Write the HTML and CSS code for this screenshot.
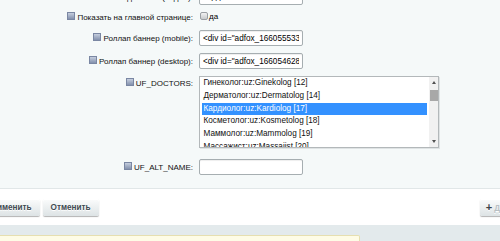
FILE: index.html
```html
<!DOCTYPE html>
<html lang="ru">
<head>
    <meta charset="UTF-8">
    <meta name="viewport" content="width=device-width, initial-scale=1.0">
    <title>Редактирование элемента</title>
    <link rel="stylesheet" href="styles.css">
</head>
<body>
    <div class="edit-form">
        <table class="fields">
            <tr>
                <td class="label"><span class="hint"></span>Название для SEO (падеж):</td>
                <td class="field"><input class="text" type="text" value="кардиологии"></td>
            </tr>
            <tr class="row-check">
                <td class="label"><span class="hint"></span>Показать на главной странице:</td>
                <td class="field"><span class="checkbox"></span>да</td>
            </tr>
            <tr>
                <td class="label"><span class="hint"></span>Роллап баннер (mobile):</td>
                <td class="field"><input class="text" type="text" value='&lt;div id="adfox_166055533360'></td>
            </tr>
            <tr>
                <td class="label"><span class="hint"></span>Роллап баннер (desktop):</td>
                <td class="field"><input class="text" type="text" value='&lt;div id="adfox_166054628451'></td>
            </tr>
            <tr class="row-list">
                <td class="label"><span class="hint"></span>UF_DOCTORS:</td>
                <td class="field">
                    <div class="listbox">
                        <div class="options">
                            <div class="option">Гинеколог:uz:Ginekolog [12]</div>
                            <div class="option">Дерматолог:uz:Dermatolog [14]</div>
                            <div class="option selected">Кардиолог:uz:Kardiolog [17]</div>
                            <div class="option">Косметолог:uz:Kosmetolog [18]</div>
                            <div class="option">Маммолог:uz:Mammolog [19]</div>
                            <div class="option">Массажист:uz:Massajist [20]</div>
                        </div>
                        <div class="scrollbar">
                            <span class="arrow up"></span>
                            <span class="thumb"></span>
                            <span class="arrow down"></span>
                        </div>
                    </div>
                </td>
            </tr>
            <tr class="row-alt">
                <td class="label"><span class="hint"></span>UF_ALT_NAME:</td>
                <td class="field"><input class="text" type="text" value=""></td>
            </tr>
        </table>
    </div>

    <div class="buttons">
        <div class="btn-group">
            <button class="btn">Применить</button>
            <button class="btn">Отменить</button>
        </div>
        <button class="btn btn-add"><b>+</b> Добавить</button>
    </div>

    <div class="notes">
        <div class="note"></div>
    </div>
</body>
</html>
```

FILE: styles.css
```css
/* admin edit form */
html, body {
    margin: 0;
    padding: 0;
    overflow: hidden;
    background: #fff;
    font-family: "Liberation Sans", Arial, sans-serif;
    color: #000;
}

.edit-form {
    background: #f5f9f9;
    border-bottom: 1px solid #e1e7e8;
    margin-top: -15px;
    padding-bottom: 10px;
}

.fields {
    border-collapse: collapse;
    border-spacing: 0;
}

.fields td {
    padding-top: 3.5px;
    padding-bottom: 3.5px;
    font-size: 8px;
}

td.label {
    width: 193px;
    padding-left: 0;
    padding-right: 6px;
    text-align: right;
    white-space: nowrap;
    vertical-align: middle;
    color: #111;
}

td.field {
    padding-left: 0;
    padding-right: 0;
}

/* small question mark icon before labels */
.hint {
    display: inline-block;
    width: 6px;
    height: 6px;
    margin-right: 2px;
    vertical-align: -0.5px;
    border: 1px solid #7a87a3;
    background: linear-gradient(#c5cede, #8391ad);
}

.row-check td {
    padding-top: 4px;
    padding-bottom: 4px;
    line-height: 10px;
}

.checkbox {
    display: inline-block;
    width: 6px;
    height: 6px;
    margin-left: 1px;
    margin-right: 1px;
    vertical-align: -1px;
    border: 1px solid #9a9fa3;
    border-radius: 2px;
    background: linear-gradient(#f2f2f2, #c7cacc);
}

input.text {
    box-sizing: border-box;
    width: 104px;
    height: 16px;
    margin: 0;
    padding: 0 3px;
    border: 1px solid #a6aeb1;
    border-radius: 2px;
    box-shadow: inset 0 1px 1px rgba(0, 0, 0, 0.07);
    background: #fff;
    font-family: "Liberation Sans", Arial, sans-serif;
    font-size: 8.2px;
    color: #000;
    outline: none;
}

.row-list td.label {
    vertical-align: top;
    padding-top: 5px;
}

.row-alt td {
    padding-top: 7px;
}

/* multi select */
.listbox {
    box-sizing: border-box;
    display: flex;
    width: 240px;
    height: 72px;
    border: 1px solid #b3b8ba;
    box-shadow: 1px 1px 0 #dfe3e4;
    background: #fff;
    overflow: hidden;
}

.options {
    flex: 1;
    padding-left: 1.5px;
    margin-right: 2px;
}

.option {
    height: 12.8px;
    line-height: 12.8px;
    padding-left: 2px;
    font-size: 8.2px;
    white-space: nowrap;
    color: #111;
}

.option.selected {
    background: #3391ff;
    color: #fff;
}

.scrollbar {
    width: 9px;
    background: #f1f1f1;
    display: flex;
    flex-direction: column;
    align-items: center;
}

.arrow {
    width: 0;
    height: 0;
    border-left: 2.5px solid transparent;
    border-right: 2.5px solid transparent;
}

.arrow.up {
    margin-top: 4px;
    border-bottom: 3px solid #505050;
}

.arrow.down {
    margin-top: auto;
    margin-bottom: 4px;
    border-top: 3px solid #505050;
}

.thumb {
    width: 8px;
    height: 11px;
    margin-top: 6px;
    background: #a8a8a8;
}

/* buttons bar */
.buttons {
    display: flex;
    align-items: center;
    height: 36px;
    background: #fff;
}

.btn-group {
    display: flex;
    gap: 3px;
    margin-left: -22px;
}

.btn {
    height: 17px;
    padding: 0 8px;
    border: none;
    border-radius: 2px;
    background: linear-gradient(#fbfcfc, #dde3e5);
    box-shadow: 0 1px 1px rgba(0, 0, 0, 0.3), inset 0 1px 0 #fff;
    font-family: "Liberation Sans", Arial, sans-serif;
    font-size: 8.2px;
    font-weight: bold;
    color: #3f4a51;
    text-shadow: 0 1px #fff;
}

.btn-add {
    margin-left: auto;
    margin-right: -40px;
    padding: 0 6px;
    color: #b8bfc3;
}

.btn-add b {
    color: #3b4348;
    font-size: 11px;
}

/* notes area */
.notes {
    background: #e3eaec;
    padding-top: 10px;
    height: 30px;
}

.note {
    width: 360px;
    height: 30px;
    box-sizing: border-box;
    border: 1px solid #e6dfb0;
    border-left: none;
    border-radius: 0 2px 0 0;
    background: #fefce6;
}
```
